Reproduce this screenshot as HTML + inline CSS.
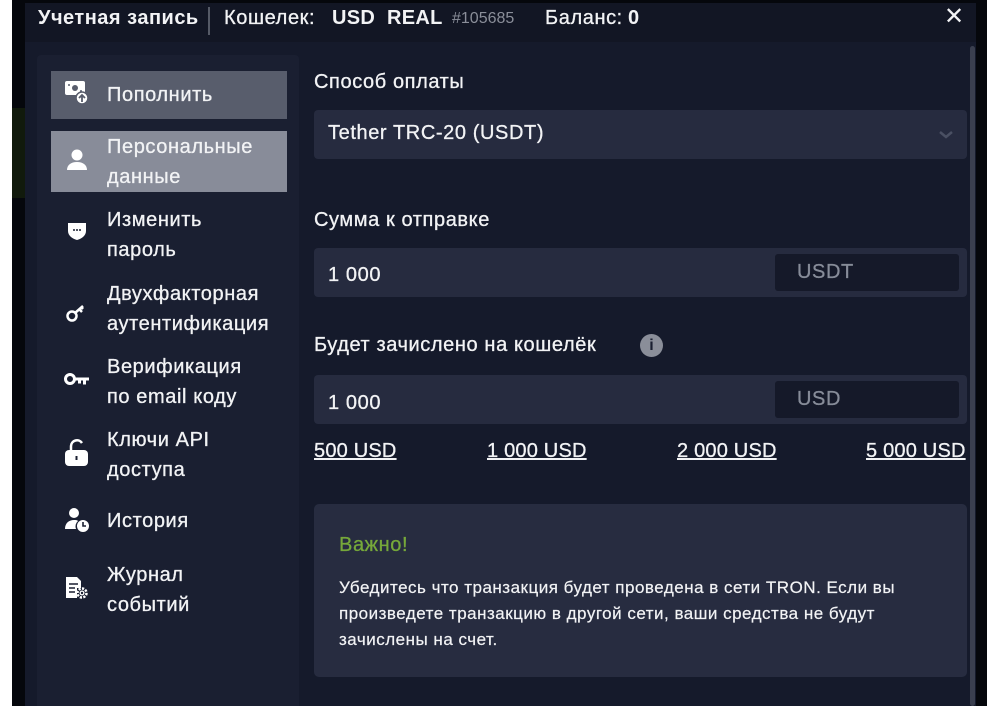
<!DOCTYPE html>
<html><head><meta charset="utf-8"><style>
*{margin:0;padding:0;box-sizing:border-box}
body{width:1000px;height:706px;background:#fff;position:relative;overflow:hidden;font-family:"Liberation Sans","DejaVu Sans",sans-serif;color:#f2f3f5}
.a{position:absolute;white-space:nowrap}
.t{font-size:20px;letter-spacing:0.6px;-webkit-text-stroke:0.3px #f2f3f5}
.m{font-size:20px;line-height:30px;letter-spacing:0.6px;-webkit-text-stroke:0.3px #f2f3f5}
</style></head><body>
<div class="a" style="left:12px;top:0;width:975px;height:706px;background:#05070c"></div>
<div class="a" style="left:25px;top:3px;width:951px;height:39px;background:#121624"></div>
<div class="a" style="left:25px;top:42px;width:951px;height:664px;background:#151a2b"></div>
<div class="a" style="left:37px;top:55px;width:262px;height:651px;background:#1a1f31;border-radius:4px 4px 0 0"></div>
<div class="a" style="left:970px;top:46px;width:5px;height:660px;background:#3a3f4f;border-radius:3px"></div>
<div class="a" style="left:12px;top:108px;width:13px;height:90px;background:#111a0c"></div>

<!-- header -->
<div class="a" style="left:38px;top:7px;font-size:20px;font-weight:bold;letter-spacing:0.5px">Учетная запись</div>
<div class="a" style="left:208px;top:7px;width:2px;height:28px;background:#555a66"></div>
<div class="a t" style="left:224px;top:7px">Кошелек:</div>
<div class="a" style="left:332px;top:7px;font-size:20px;font-weight:bold;letter-spacing:0.3px">USD</div>
<div class="a" style="left:387px;top:7px;font-size:20px;font-weight:bold;letter-spacing:0.3px">REAL</div>
<div class="a" style="left:452px;top:10px;font-size:16px;color:#8a8e99">#105685</div>
<div class="a t" style="left:545px;top:7px">Баланс:</div>
<div class="a" style="left:628px;top:7px;font-size:20px;font-weight:bold">0</div>
<div class="a" style="left:944px;top:2px;font-size:24px;font-weight:bold">✕</div>

<!-- sidebar -->
<div class="a" style="left:51px;top:71px;width:236px;height:48px;background:#585d6c"></div>
<div class="a" style="left:51px;top:131px;width:236px;height:61px;background:#888c99"></div>
<svg class="a" style="left:64px;top:80px" width="26" height="26" viewBox="0 0 26 26"><rect x="1" y="1" width="20" height="14" rx="2" fill="#fff"/><circle cx="11" cy="8" r="3" fill="#585d6c"/><circle cx="5" cy="5" r="1" fill="#585d6c"/><circle cx="17" cy="11" r="1" fill="#585d6c"/><circle cx="18" cy="18" r="6" fill="#fff" stroke="#585d6c" stroke-width="1.5"/><path d="M18 22v-7M15 18l3-3 3 3" stroke="#585d6c" stroke-width="1.8" fill="none"/></svg>
<div class="a t" style="left:107px;top:84px">Пополнить</div>
<svg class="a" style="left:66px;top:148px" width="22" height="24" viewBox="0 0 22 24"><circle cx="11" cy="7" r="5.5" fill="#fff"/><path d="M1 22c0-5 4-8 10-8s10 3 10 8z" fill="#fff"/></svg>
<div class="a m" style="left:107px;top:132px">Персональные<br>данные</div>

<svg class="a" style="left:66px;top:221px" width="22" height="20" viewBox="0 0 22 20"><path d="M2 2h18v8c0 5-5 8-9 9-4-1-9-4-9-9z" fill="#fff"/><circle cx="8" cy="9" r="1" fill="#1a1f31"/><circle cx="11" cy="9" r="1" fill="#1a1f31"/><circle cx="14" cy="9" r="1" fill="#1a1f31"/></svg>
<div class="a m" style="left:107px;top:205px">Изменить<br>пароль</div>
<svg class="a" style="left:65px;top:303px" width="22" height="20" viewBox="0 0 22 20"><circle cx="7" cy="13" r="4.5" stroke="#fff" stroke-width="2.5" fill="none"/><path d="M10 10l8-7M14 6l3 3M16 4l2 2" stroke="#fff" stroke-width="2.5"/></svg>
<div class="a m" style="left:107px;top:279px">Двухфакторная<br>аутентификация</div>
<svg class="a" style="left:64px;top:372px" width="26" height="14" viewBox="0 0 26 14"><circle cx="6" cy="7" r="4.5" stroke="#fff" stroke-width="3" fill="none"/><path d="M10 5.5h15v3h-3v4h-3v-4h-2v3h-3v-3h-4z" fill="#fff"/></svg>
<div class="a m" style="left:107px;top:352px">Верификация<br>по email коду</div>
<svg class="a" style="left:64px;top:438px" width="26" height="30" viewBox="0 0 26 30"><path d="M7 13V8a6 6 0 0 1 11-3" stroke="#fff" stroke-width="2.5" fill="none"/><rect x="1" y="12" width="23" height="16" rx="4" fill="#fff"/><rect x="11.5" y="18" width="2" height="4" fill="#1a1f31"/></svg>
<div class="a m" style="left:107px;top:425px">Ключи API<br>доступа</div>
<svg class="a" style="left:64px;top:507px" width="26" height="26" viewBox="0 0 26 26"><circle cx="10" cy="6" r="5" fill="#fff"/><path d="M1 22c0-6 4-9 9-9 2 0 3 0 4 1a7 7 0 0 0-2 8z" fill="#fff"/><circle cx="19" cy="19" r="6" fill="#fff"/><path d="M19 15v4h3" stroke="#1a1f31" stroke-width="1.6" fill="none"/></svg>
<div class="a t" style="left:107px;top:510px">История</div>
<svg class="a" style="left:64px;top:575px" width="26" height="26" viewBox="0 0 26 26"><path d="M2 2h11l4 4v7h-4v10H2z" fill="#fff"/><path d="M5 9h9M5 13h6M5 17h6" stroke="#1a1f31" stroke-width="1.6"/><circle cx="18" cy="18" r="4.5" fill="none" stroke="#fff" stroke-width="2.5" stroke-dasharray="2.2 1.3"/><circle cx="18" cy="18" r="2.5" fill="#fff"/><circle cx="18" cy="18" r="1.2" fill="#1a1f31"/></svg>
<div class="a m" style="left:107px;top:560px">Журнал<br>событий</div>

<!-- content -->
<div class="a t" style="left:314px;top:71px">Способ оплаты</div>
<div class="a" style="left:314px;top:110px;width:653px;height:49px;background:#262b3f;border-radius:4px"></div>
<div class="a t" style="left:328px;top:122px">Tether TRC-20 (USDT)</div>
<svg class="a" style="left:938px;top:130px" width="16" height="10" viewBox="0 0 16 10"><path d="M2 2l6 5 6-5" stroke="#4a5063" stroke-width="2.5" fill="none"/></svg>

<div class="a t" style="left:314px;top:209px">Сумма к отправке</div>
<div class="a" style="left:314px;top:248px;width:653px;height:49px;background:#262b3f;border-radius:4px"></div>
<div class="a t" style="left:328px;top:264px">1 000</div>
<div class="a" style="left:775px;top:254px;width:184px;height:37px;background:#151929;border-radius:3px"></div>
<div class="a t" style="left:797px;top:261px;color:#878c99;-webkit-text-stroke:0.3px #878c99">USDT</div>

<div class="a t" style="left:314px;top:334px">Будет зачислено на кошелёк</div>
<div class="a" style="left:640px;top:334px;width:23px;height:23px;border-radius:50%;background:#8a8e99;color:#1a1f31;font-weight:bold;font-size:16px;text-align:center;line-height:23px">i</div>
<div class="a" style="left:314px;top:375px;width:653px;height:49px;background:#262b3f;border-radius:4px"></div>
<div class="a t" style="left:328px;top:392px">1 000</div>
<div class="a" style="left:775px;top:381px;width:184px;height:37px;background:#151929;border-radius:3px"></div>
<div class="a t" style="left:797px;top:388px;color:#878c99;-webkit-text-stroke:0.3px #878c99">USD</div>

<div class="a t" style="left:314px;top:440px;text-decoration:underline;letter-spacing:0.2px">500 USD</div>
<div class="a t" style="left:487px;top:440px;text-decoration:underline;letter-spacing:0.2px">1 000 USD</div>
<div class="a t" style="left:677px;top:440px;text-decoration:underline;letter-spacing:0.2px">2 000 USD</div>
<div class="a t" style="left:866px;top:440px;text-decoration:underline;letter-spacing:0.2px">5 000 USD</div>

<div class="a" style="left:314px;top:504px;width:653px;height:173px;background:#272c40;border-radius:5px"></div>
<div class="a t" style="left:339px;top:534px;color:#76a83a;-webkit-text-stroke:0.3px #76a83a">Важно!</div>
<div class="a" style="left:339px;top:575px;font-size:17px;line-height:26px;letter-spacing:0.5px;-webkit-text-stroke:0.2px #f2f3f5">Убедитесь что транзакция будет проведена в сети TRON. Если вы<br>произведете транзакцию в другой сети, ваши средства не будут<br>зачислены на счет.</div>
</body></html>
